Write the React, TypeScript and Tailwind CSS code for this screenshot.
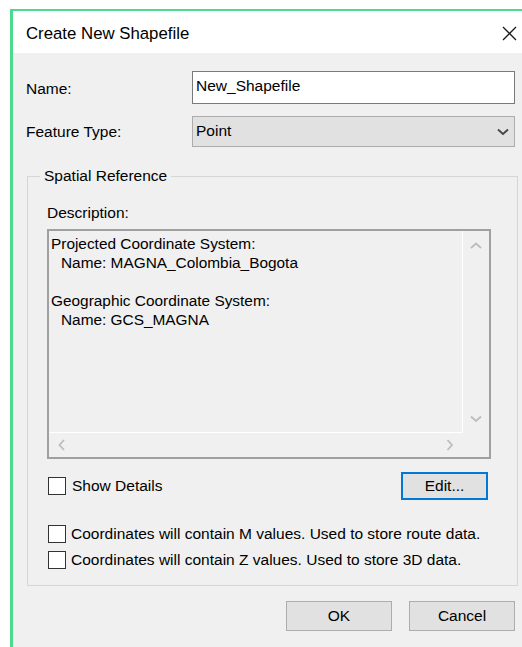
import React from "react";

const FONT = { fontFamily: '"Liberation Sans", Arial, sans-serif' };

function Chevron({ dir, className }: { dir: "up" | "down" | "left" | "right"; className?: string }) {
  const d =
    dir === "up"
      ? "M1 6 L6 1.5 L11 6"
      : dir === "down"
      ? "M1 1.5 L6 6 L11 1.5"
      : dir === "left"
      ? "M6 1 L1.5 6 L6 11"
      : "M1.5 1 L6 6 L1.5 11";
  const vertical = dir === "up" || dir === "down";
  return (
    <svg
      width={vertical ? 12 : 8}
      height={vertical ? 8 : 12}
      viewBox={vertical ? "0 0 12 8" : "0 0 8 12"}
      className={className}
      fill="none"
      stroke="currentColor"
      strokeWidth={1.8}
    >
      <path d={d} />
    </svg>
  );
}

function CheckBox() {
  return <div className="w-[18px] h-[18px] border border-[#333333] bg-white shrink-0" />;
}

function CheckRow({ label }: { label: string }) {
  return (
    <div className="flex items-center h-[26px] gap-[5px]">
      <CheckBox />
      <span className="text-[15.5px] leading-[18px] text-black">{label}</span>
    </div>
  );
}

export default function App() {
  return (
    <div className="w-[522px] h-[647px] bg-white overflow-hidden pl-[10px] pt-[9px]" style={FONT}>
      <div className="w-[512px] h-[638px] border-t-[2px] border-l-[3px] border-[#4fd98e] flex flex-col">
        {/* title bar */}
        <div className="h-[42px] bg-white flex items-center pl-[13px] pr-[5px] pt-[3px] shrink-0">
          <span className="text-[16.8px] text-black leading-[20px]">Create New Shapefile</span>
          <svg width="15" height="15" viewBox="0 0 15 15" className="ml-auto text-[#1a1a1a]">
            <path d="M1 1 L14 14 M14 1 L1 14" stroke="currentColor" strokeWidth={1.3} />
          </svg>
        </div>

        {/* body */}
        <div className="flex-1 bg-[#f0f0f0] pl-[13px] pt-[18px] text-black">
          <div className="flex items-center h-[33px]">
            <span className="w-[166px] text-[15.5px] leading-[18px] pt-[3px]">Name:</span>
            <div className="w-[323px] h-[33px] bg-white border border-[#7a7a7a] flex items-center pl-[3px] pb-[4px]">
              <span className="text-[15.5px] leading-[18px]">New_Shapefile</span>
            </div>
          </div>

          <div className="flex items-center h-[31px] mt-[12px]">
            <span className="w-[166px] text-[15.5px] leading-[18px]">Feature Type:</span>
            <div className="w-[323px] h-[31px] bg-[#e1e1e1] border border-[#adadad] flex items-center pl-[3px] pr-[5px] pb-[2px]">
              <span className="text-[15.5px] leading-[18px]">Point</span>
              <Chevron dir="down" className="ml-auto mt-[2px] text-[#444444]" />
            </div>
          </div>

          {/* spatial reference group */}
          <fieldset className="mt-[20px] ml-[1px] w-[491px] h-[419px] border border-[#d6d6d6] p-0 m-0">
            <legend className="ml-[12px] px-[4px] text-[15.5px] leading-[18px]">Spatial Reference</legend>
            <div className="pl-[19px] pr-[26px]">
              <div className="mt-[19px] text-[15.5px] leading-[18px]">Description:</div>

              <div className="mt-[7px] w-[444px] h-[230px] border-[2px] border-[#a0a0a0] grid grid-cols-[1fr_26px] grid-rows-[1fr_24px]">
                <div className="border-r border-b border-white pl-[2px] pt-[3px] text-[15.4px] leading-[19px]">
                  <div>Projected Coordinate System:</div>
                  <div className="pl-[10px]">Name: MAGNA_Colombia_Bogota</div>
                  <div className="h-[19px]" />
                  <div>Geographic Coordinate System:</div>
                  <div className="pl-[10px]">Name: GCS_MAGNA</div>
                </div>
                <div className="flex flex-col items-center justify-between pt-[11px] pb-[10px] text-[#bdbdbd]">
                  <Chevron dir="up" />
                  <Chevron dir="down" />
                </div>
                <div className="flex items-center justify-between pl-[9px] pr-[9px] text-[#bdbdbd]">
                  <Chevron dir="left" />
                  <Chevron dir="right" />
                </div>
                <div />
              </div>

              <div className="mt-[13px] h-[28px] flex items-center pl-[1px]">
                <div className="flex items-center gap-[6px]">
                  <CheckBox />
                  <span className="text-[15.5px] leading-[18px]">Show Details</span>
                </div>
                <div className="ml-auto mr-[3px] w-[87px] h-[28px] border-[2px] border-[#0078d7] bg-[#e1e1e1] flex items-center justify-center text-[15.5px] leading-[18px]">
                  Edit...
                </div>
              </div>

              <div className="mt-[21px] pl-[1px]">
                <CheckRow label="Coordinates will contain M values. Used to store route data." />
                <CheckRow label="Coordinates will contain Z values. Used to store 3D data." />
              </div>
            </div>
          </fieldset>

          {/* dialog buttons */}
          <div className="mt-[15px] flex gap-[17px] pl-[260px]">
            <div className="w-[106px] h-[30px] border border-[#adadad] bg-[#e1e1e1] flex items-center justify-center text-[15.5px] leading-[18px]">
              OK
            </div>
            <div className="w-[106px] h-[30px] border border-[#adadad] bg-[#e1e1e1] flex items-center justify-center text-[15.5px] leading-[18px]">
              Cancel
            </div>
          </div>
        </div>
      </div>
    </div>
  );
}
